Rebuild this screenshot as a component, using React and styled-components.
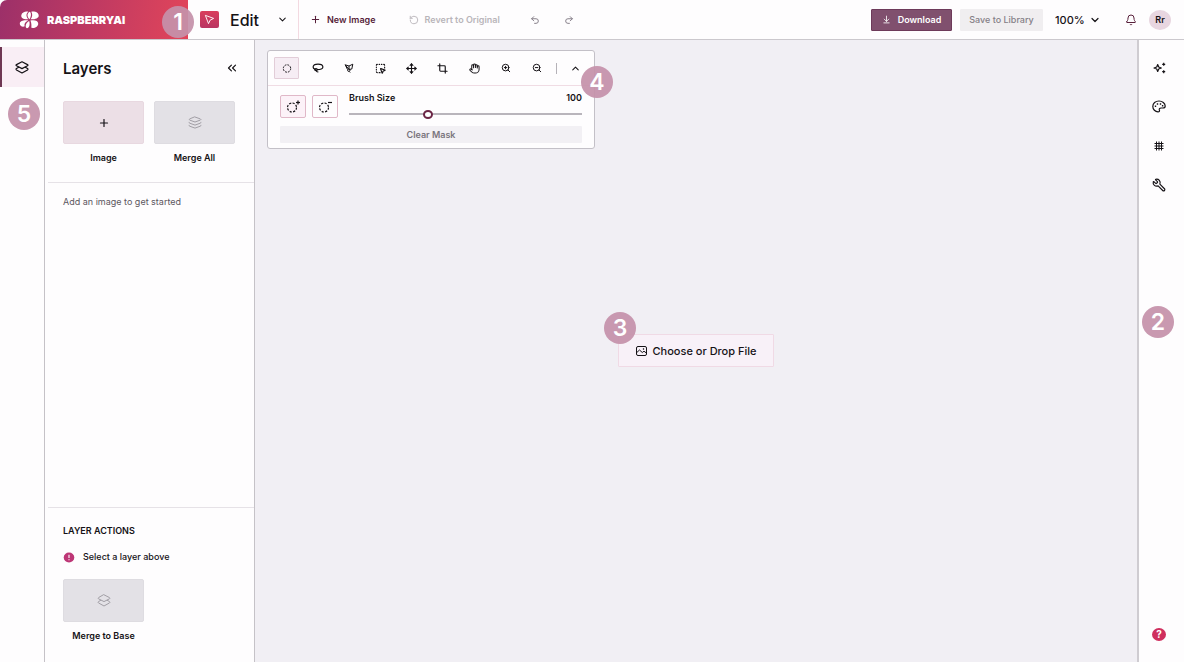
import React, { useState } from 'react'
import styled, { createGlobalStyle } from 'styled-components'
import {
    ArrowDownToLine,
    Bell,
    ChevronDown,
    ChevronUp,
    ChevronsLeft,
    Crop,
    Hand,
    Move,
    Plus,
    Redo2,
    RotateCcw,
    SquareDashedMousePointer,
    Undo2,
    Wrench,
    ZoomIn,
    ZoomOut,
} from 'lucide-react'

const GlobalStyle = createGlobalStyle`
    * {
        box-sizing: border-box;
    }
    body {
        margin: 0;
        background: #fff;
        color: #151216;
        font-family: Inter, "Liberation Sans", sans-serif;
        font-size: 9px;
    }
    button, select, input {
        font-family: inherit;
        color: inherit;
        margin: 0;
    }
    button {
        cursor: pointer;
    }
    svg {
        display: block;
        flex: none;
    }
`
const Page = styled.div`
    display: flex;
    flex-direction: column;
    min-height: 100vh;
`
const Header = styled.header`
    display: flex;
    align-items: stretch;
    height: 40px;
    border-bottom: 1px solid #cbc8cd;
    background: #fefdfe;
`
const Brand = styled.a`
    position: relative;
    display: flex;
    align-items: center;
    gap: 7px;
    width: 188px;
    padding-left: 19px;
    color: #fff;
    font-size: 11px;
    font-weight: 900;
    text-decoration: none;
    background: linear-gradient(100deg, #9c3069 0%, #c03a62 50%, #e2455a 100%);
    border-top-left-radius: 7px;
`
const Badge = styled.span`
    position: absolute;
    top: ${(props) => props.top};
    left: ${(props) => props.left};
    z-index: 2;
    width: 32px;
    height: 32px;
    border-radius: 50%;
    background: rgba(197, 145, 170, 0.93);
    color: #fff;
    font-size: 23px;
    line-height: 32px;
    font-weight: 600;
    text-align: center;
`
const ModePicker = styled.div`
    display: flex;
    align-items: center;
    gap: 11px;
    width: 111px;
    padding-left: 12px;
    border-right: 1px solid #f3d9e1;
`
const ModeIcon = styled.span`
    display: flex;
    align-items: center;
    justify-content: center;
    width: 19px;
    height: 17px;
    border-radius: 2px;
    background: linear-gradient(#d93d5c, #b93562);
`
const SelectBox = styled.div`
    position: relative;
    display: flex;
    align-items: center;
    svg {
        position: absolute;
        right: 0;
        pointer-events: none;
    }
`
const Select = styled.select`
    appearance: none;
    width: ${(props) => props.$width};
    padding: 0;
    border: 0;
    background: transparent;
    font-size: ${(props) => props.$size};
    font-weight: 500;
`
const HeaderActions = styled.div`
    display: flex;
    align-items: center;
    gap: 33px;
    padding-left: 11px;
`
const HistoryButtons = styled.div`
    display: flex;
    gap: 24px;
    margin-left: -3px;
`
const TextButton = styled.button`
    display: flex;
    align-items: center;
    gap: 6px;
    padding: 0;
    border: 0;
    background: none;
    color: ${(props) => props.$color || '#571f3a'};
    font-size: 9px;
    font-weight: 600;
`
const Account = styled.div`
    display: flex;
    align-items: center;
    margin-left: auto;
    padding-right: 13px;
    gap: 12px;
`
const ButtonPair = styled.div`
    display: flex;
    gap: 8px;
`
const SolidButton = styled.button`
    display: flex;
    align-items: center;
    justify-content: center;
    gap: 7px;
    width: ${(props) => (props.$primary ? '81px' : '83px')};
    height: 22px;
    padding: 0;
    border: 1px solid ${(props) => (props.$primary ? '#6d3a5a' : '#f0eef0')};
    border-radius: 1px;
    background: ${(props) => (props.$primary ? '#80506e' : '#f0eef0')};
    color: ${(props) => (props.$primary ? '#fff' : '#858087')};
    font-size: 9px;
    font-weight: ${(props) => (props.$primary ? 600 : 500)};
    white-space: nowrap;
`
const UserTools = styled.div`
    display: flex;
    align-items: center;
    gap: 12px;
    padding-left: 12px;
`
const Avatar = styled.button`
    width: 22px;
    height: 20px;
    padding: 0;
    border: 0;
    border-radius: 50%;
    background: #e8d6e0;
    font-size: 9px;
    font-weight: 600;
`
const Body = styled.div`
    display: flex;
    flex: 1;
`
const Rail = styled.nav`
    position: relative;
    flex: none;
    display: flex;
    flex-direction: column;
    width: 45px;
    padding-top: 7px;
    border-right: 1px solid #c5c2c7;
    background: #fefdfe;
`
const RailTab = styled.button`
    display: flex;
    align-items: center;
    justify-content: center;
    height: 40px;
    padding: 0 2px 0 0;
    border: 0;
    border-left: 2px solid #6e3753;
    background: #f9eef5;
`
const Panel = styled.aside`
    flex: none;
    display: flex;
    flex-direction: column;
    width: 210px;
    border-right: 1px solid #c5c2c7;
    padding-left: 3px;
    background: #fefdfe;
`
const PanelSection = styled.section`
    display: flex;
    flex-direction: column;
    flex: ${(props) => (props.$grow ? 1 : 'none')};
    padding: ${(props) => props.$pad};
    border-bottom: ${(props) => (props.$last ? '0' : '1px solid #e6e2e7')};
`
const PanelHead = styled.div`
    display: flex;
    align-items: center;
    justify-content: space-between;
    height: 20px;
    margin-bottom: 23px;
`
const Title = styled.h2`
    margin: 0;
    font-size: 15px;
    font-weight: 600;
`
const IconButton = styled.button`
    display: flex;
    padding: 0;
    border: 0;
    background: none;
`
const Tiles = styled.div`
    display: grid;
    grid-template-columns: 81px 81px;
    gap: 10px;
`
const Tile = styled.button`
    display: flex;
    flex-direction: column;
    align-items: stretch;
    gap: 8px;
    padding: 0;
    border: 0;
    background: none;
    font-size: 9px;
    line-height: 12px;
    font-weight: 600;
`
const TileFace = styled.span`
    display: flex;
    align-items: center;
    justify-content: center;
    height: 43px;
    border: 1px solid ${(props) => (props.$pink ? '#e8d8e0' : '#dedce1')};
    border-radius: 2px;
    background: ${(props) => (props.$pink ? '#ecdfe6' : '#e3e1e6')};
    color: ${(props) => (props.$pink ? '#151216' : '#a19ea5')};
`
const Note = styled.p`
    margin: 0;
    color: #5c575f;
    font-size: 9px;
    line-height: 12px;
`
const SubTitle = styled.h3`
    margin: 0 0 14px;
    font-size: 9px;
    line-height: 12px;
    font-weight: 600;
`
const Warning = styled.p`
    display: flex;
    align-items: center;
    gap: 8px;
    margin: 0 0 16px;
    font-size: 9px;
    line-height: 12px;
    font-weight: 500;
`
const Canvas = styled.main`
    flex: 1;
    display: flex;
    flex-direction: column;
    padding: 10px 12px;
    background: #f1eff4;
`
const Toolbox = styled.section`
    position: relative;
    width: 328px;
    border: 1px solid #c3c0c7;
    border-radius: 3px;
    background: #fefdfe;
`
const ToolRow = styled.div`
    display: flex;
    align-items: center;
    justify-content: space-between;
    height: 35px;
    padding: 0 6px;
    border-bottom: 1px solid #f0dce4;
`
const ToolButton = styled.button`
    display: flex;
    align-items: center;
    justify-content: center;
    width: 25px;
    height: 22px;
    padding: 0;
    border: 1px solid ${(props) => (props.$active ? '#e2cdd8' : 'transparent')};
    border-radius: 1px;
    background: ${(props) => (props.$active ? '#f6edf4' : 'none')};
`
const Separator = styled.span`
    width: 1px;
    height: 11px;
    background: #b5b2b8;
`
const BrushArea = styled.div`
    display: flex;
    flex-direction: column;
    gap: 7px;
    padding: 6px 12px 5px;
`
const BrushRow = styled.div`
    display: flex;
    gap: 6px;
`
const MaskButton = styled.button`
    display: flex;
    align-items: center;
    justify-content: center;
    width: 26px;
    height: 23px;
    margin-top: 3px;
    padding: 0;
    border: 1px solid #e0b8c8;
    border-radius: 2px;
    background: ${(props) => (props.$active ? '#fcf2f8' : '#fefdfe')};
`
const SliderField = styled.div`
    flex: 1;
    display: flex;
    flex-direction: column;
    gap: 5px;
    padding-left: 5px;
    font-size: 9px;
    line-height: 12px;
    font-weight: 600;
`
const SliderLabels = styled.div`
    display: flex;
    justify-content: space-between;
`
const Slider = styled.input`
    appearance: none;
    width: 100%;
    height: 10px;
    background: linear-gradient(#b9b5bc, #b9b5bc) center / 100% 2px no-repeat;
    &::-webkit-slider-thumb {
        appearance: none;
        width: 10px;
        height: 9px;
        border: 2px solid #6b2545;
        border-radius: 50%;
        background: #fff;
    }
`
const ClearButton = styled.button`
    height: 17px;
    padding: 0;
    border: 0;
    border-radius: 1px;
    background: #f2f0f4;
    color: #79747c;
    font-size: 9px;
    font-weight: 600;
`
const DropArea = styled.div`
    flex: 1;
    display: flex;
    align-items: center;
    justify-content: center;
    min-height: 300px;
    padding-bottom: 100px;
`
const DropButton = styled.button`
    position: relative;
    display: flex;
    align-items: center;
    justify-content: center;
    gap: 6px;
    width: 156px;
    height: 33px;
    padding: 0;
    border: 1px solid #f0dae5;
    border-radius: 1px;
    background: #f8f1f8;
    font-size: 11px;
    font-weight: 500;
    white-space: nowrap;
`
const ToolsRail = styled.nav`
    position: relative;
    flex: none;
    display: flex;
    flex-direction: column;
    align-items: center;
    gap: 26px;
    width: 47px;
    padding: 21px 5px 21px 0;
    border-left: 2px solid #cfccd1;
    background: #fefdfe;
`
const RailButton = styled.button`
    display: flex;
    align-items: center;
    justify-content: center;
    width: 20px;
    height: 13px;
    padding: 0;
    border: 0;
    background: none;
`
const MirroredWrench = styled(Wrench)`
    transform: scaleX(-1);
`
const HelpButton = styled.button`
    width: 14px;
    height: 13px;
    margin-top: auto;
    padding: 0;
    border: 0;
    border-radius: 50%;
    background: #cf2f5e;
    color: #fff;
    font-size: 10px;
    line-height: 13px;
    font-weight: 700;
`

const Logo = () => (
    <svg width="21" height="18" viewBox="0 0 21 18" fill="#fff">
        <path d="M9.3 8.2C5.5 8.8 1.8 7.6 2.3 4.3C2.8 1.200 7 0 9.300 .8C7 2.500 6.800 5.500 9.300 8.200Z" />
        <path d="M10.500 8.300C7.700 5.600 7.900 2.200 10.800 .8C12.400 2 12.300 5.600 10.500 8.300Z" />
        <path d="M11.700 8.300C13.600 5.600 13.600 2.700 12.300 .7C16 0 19.500 1.600 19.700 4.400C19.900 7.200 15.500 8.600 11.700 8.300Z" />
        <path d="M9.300 9.600C6.800 8.700 1.200 9 .8 12.300C.5 15.200 3.800 16.500 5.700 15.300C4.900 12.600 6.800 10.700 9.300 9.600Z" />
        <path d="M10.200 9.900C11.200 13.500 10.300 17 7.900 17.200C5.600 16.500 6.600 11.500 10.200 9.900Z" />
        <path d="M11.400 9.600C15 8.900 19 9.300 19.200 12.400C19.400 15.300 16 17.500 12.300 16.800C12.600 14.500 12.500 12 11.400 9.600Z" />
    </svg>
)
const CursorIcon = () => (
    <svg width="11" height="11" viewBox="0 0 12 12" fill="none" stroke="#fff" strokeLinejoin="round">
        <path d="M1.500 1.500L10.500 4.800L6.700 6.700L4.900 10.500Z" />
    </svg>
)
const StackIcon = ({ sheets = 2, stroke = 1 }) => (
    <svg
        width="14"
        height="13"
        viewBox="0 0 14 13"
        fill="none"
        stroke="currentColor"
        strokeWidth={stroke}
        strokeLinejoin="round"
        strokeLinecap="round"
    >
        {sheets === 3 ? (
            <>
                <path d="M7 1L12.300 2.900Q13.500 3.500 12.300 4.100L7 6L1.700 4.100Q.5 3.500 1.700 2.900Z" />
                <path d="M1 6.300Q1 6.900 1.700 7.200L7 9.100L12.300 7.200Q13 6.900 13 6.300" />
                <path d="M1 9.300Q1 9.900 1.700 10.200L7 12.100L12.300 10.200Q13 9.900 13 9.300" />
            </>
        ) : (
            <>
                <path d="M7 .8L12.500 3.600Q13.500 4.200 12.500 4.800L7 7.600L1.500 4.800Q.5 4.200 1.500 3.600Z" />
                <path d="M3.700 6.300L1.500 7.600Q.5 8.200 1.500 8.900L7 12L12.500 8.900Q13.500 8.200 12.500 7.600L10.300 6.300" />
            </>
        )}
    </svg>
)
const DashedCircle = ({ sign }) => (
    <svg width="14" height="13" viewBox="0 0 14 13" fill="none" stroke="#151216" strokeWidth={sign ? 1.2 : 1}>
        <circle
            cx={sign ? 6 : 7}
            cy={sign ? 7.5 : 6.5}
            r={sign ? 4.5 : 3.7}
            strokeDasharray={sign ? '2.2 1.334' : '1.8 1.106'}
        />
        {sign && <path d="M10 2.500H14" />}
        {sign === 'plus' && <path d="M12 0.500V4.500" />}
    </svg>
)
const LassoIcon = () => (
    <svg width="12" height="10" viewBox="0 0 12 10" fill="none" stroke="#151216" strokeWidth="1.200" strokeLinecap="round">
        <path d="M3.300 6.400C1.800 5.900 1 5.100 1.100 4C1.300 2.200 3.500 1.200 6 1.200S10.800 2.200 10.900 4C10.900 5.700 8.500 6.700 5.200 6.700" />
        <ellipse cx="4" cy="6.600" rx="1.300" ry="1" />
        <path d="M4.200 7.600C4.500 8.600 5 8.800 6 9" />
    </svg>
)
const PolygonLasso = () => (
    <svg width="10" height="10" viewBox="0 0 10 10" fill="none" stroke="#151216" strokeLinejoin="round">
        <path d="M1.200 1.800L5 3L8.800 1.200L7.800 6L5 6.500Z" />
        <path d="M1.200 1.800L3.500 6.500M5 3L5 6" />
        <circle cx="4.800" cy="7.200" r="1.200" />
        <path d="M5 8.300L6.200 9.500" />
    </svg>
)
const SparklesIcon = () => (
    <svg width="13" height="12" viewBox="0 0 13 12" fill="none" stroke="#151216" strokeWidth="1.200" strokeLinejoin="round">
        <path d="M4.700 2.500L5.700 5L8.300 6L5.700 7L4.700 9.500L3.700 7L1 6L3.700 5Z" />
        <path d="M10.700 .8V3.800M9.200 2.300H12.200M10.700 8.200V11.200M9.200 9.700H12.200" />
    </svg>
)
const PaletteIcon = () => (
    <svg width="14" height="13" viewBox="0 0 14 13" fill="none" stroke="#151216" strokeWidth="1.200">
        <path d="M7 1C3.500 1 .8 3.400 .8 6.400S3.300 11.800 6 11.800C7.300 11.800 7.800 11 7.400 10.100C6.900 8.900 7.600 8 9 8H11C12.500 8 13.200 7.200 13.200 6C13.100 3.200 10.400 1 7 1Z" />
        <path d="M3.500 5.500V7M5.500 3.300V4.800M8.500 3.300V4.800M10.600 5V6.400" strokeWidth="1.400" />
    </svg>
)
const GridIcon = () => (
    <svg width="10" height="10" viewBox="0 0 10 10" fill="none" stroke="#151216">
        <path d="M2.500 .5V9.500M5 .5V9.500M7.500 .5V9.500M.5 2.500H9.500M.5 5H9.500M.5 7.500H9.500" />
    </svg>
)
const PictureIcon = () => (
    <svg width="11" height="10" viewBox="0 0 11 10" fill="none" stroke="#151216" strokeLinejoin="round">
        <rect x=".5" y=".5" width="10" height="9" rx="1.500" />
        <path d="M.8 6.500L3.500 4L6.300 6.500L8 5.200L10.300 7" />
        <circle cx="7.500" cy="3" r=".4" />
    </svg>
)
const AlertIcon = () => (
    <svg width="12" height="11" viewBox="0 0 12 11">
        <ellipse cx="6" cy="5.500" rx="5.300" ry="5" fill="#bd3676" />
        <path d="M6 2.800V6M6 7.200V8.300" stroke="#fff" strokeWidth="1.100" />
    </svg>
)

const tools = [
    { name: 'Brush', icon: <DashedCircle /> },
    { name: 'Lasso', icon: <LassoIcon /> },
    { name: 'Polygon lasso', icon: <PolygonLasso /> },
    { name: 'Select area', icon: <SquareDashedMousePointer size={11} strokeWidth={2.5} /> },
    { name: 'Move', icon: <Move size={11} strokeWidth={2.5} /> },
    { name: 'Crop', icon: <Crop size={11} strokeWidth={2.5} /> },
    { name: 'Pan', icon: <Hand size={11} strokeWidth={2.2} /> },
    { name: 'Zoom in', icon: <ZoomIn size={10} strokeWidth={2.4} /> },
    { name: 'Zoom out', icon: <ZoomOut size={10} strokeWidth={2.4} /> },
]

const TopBar = () => (
    <Header>
        <Brand href="#">
            <Logo />
            RASPBERRYAI
            <Badge top="6px" left="162px">1</Badge>
        </Brand>
        <ModePicker>
            <ModeIcon>
                <CursorIcon />
            </ModeIcon>
            <SelectBox>
                <Select aria-label="Mode" $width="58px" $size="16px">
                    <option>Edit</option>
                </Select>
                <ChevronDown size={11} strokeWidth={2.2} />
            </SelectBox>
        </ModePicker>
        <HeaderActions>
            <TextButton>
                <Plus size={11} strokeWidth={2.2} />
                New Image
            </TextButton>
            <TextButton $color="#b9b5ba">
                <RotateCcw size={10} strokeWidth={2.2} />
                Revert to Original
            </TextButton>
            <HistoryButtons>
                <TextButton aria-label="Undo" $color="#87808a">
                    <Undo2 size={10} strokeWidth={2.4} />
                </TextButton>
                <TextButton aria-label="Redo" $color="#87808a">
                    <Redo2 size={10} strokeWidth={2.4} />
                </TextButton>
            </HistoryButtons>
        </HeaderActions>
        <Account>
            <ButtonPair>
                <SolidButton $primary>
                    <ArrowDownToLine size={9} strokeWidth={2.2} />
                    Download
                </SolidButton>
                <SolidButton>Save to Library</SolidButton>
            </ButtonPair>
            <SelectBox>
                <Select aria-label="Zoom" $width="46px" $size="11px">
                    <option>100%</option>
                </Select>
                <ChevronDown size={12} strokeWidth={2.4} />
            </SelectBox>
            <UserTools>
                <IconButton aria-label="Notifications">
                    <Bell size={12} strokeWidth={2} color="#571f3a" />
                </IconButton>
                <Avatar>Rr</Avatar>
            </UserTools>
        </Account>
    </Header>
)

const LayersPanel = () => (
    <Panel>
        <PanelSection $pad="18px 15px 18px">
            <PanelHead>
                <Title>Layers</Title>
                <IconButton aria-label="Collapse panel">
                    <ChevronsLeft size={14} strokeWidth={2} />
                </IconButton>
            </PanelHead>
            <Tiles>
                <Tile>
                    <TileFace $pink>
                        <Plus size={12} strokeWidth={2.4} />
                    </TileFace>
                    Image
                </Tile>
                <Tile>
                    <TileFace>
                        <StackIcon sheets={3} />
                    </TileFace>
                    Merge All
                </Tile>
            </Tiles>
        </PanelSection>
        <PanelSection $grow $pad="13px 15px">
            <Note>Add an image to get started</Note>
        </PanelSection>
        <PanelSection $last $pad="17px 15px 20px">
            <SubTitle>LAYER ACTIONS</SubTitle>
            <Warning>
                <AlertIcon />
                Select a layer above
            </Warning>
            <Tiles>
                <Tile>
                    <TileFace>
                        <StackIcon />
                    </TileFace>
                    Merge to Base
                </Tile>
            </Tiles>
        </PanelSection>
    </Panel>
)

const BrushTools = () => {
    const [tool, setTool] = useState('Brush')
    const [mask, setMask] = useState('plus')
    const [size, setSize] = useState(100)
    return (
        <Toolbox>
            <ToolRow>
                {tools.map((t) => (
                    <ToolButton
                        key={t.name}
                        aria-label={t.name}
                        $active={tool === t.name}
                        onClick={() => setTool(t.name)}
                    >
                        {t.icon}
                    </ToolButton>
                ))}
                <Separator />
                <ToolButton aria-label="Collapse">
                    <ChevronUp size={11} strokeWidth={2.2} />
                </ToolButton>
            </ToolRow>
            <BrushArea>
                <BrushRow>
                    <MaskButton
                        aria-label="Add to mask"
                        $active={mask === 'plus'}
                        onClick={() => setMask('plus')}
                    >
                        <DashedCircle sign="plus" />
                    </MaskButton>
                    <MaskButton
                        aria-label="Remove from mask"
                        $active={mask === 'minus'}
                        onClick={() => setMask('minus')}
                    >
                        <DashedCircle sign="minus" />
                    </MaskButton>
                    <SliderField>
                        <SliderLabels>
                            <label htmlFor="brush-size">Brush Size</label>
                            <output htmlFor="brush-size">{size}</output>
                        </SliderLabels>
                        <Slider
                            id="brush-size"
                            type="range"
                            min="0"
                            max="300"
                            value={size}
                            onChange={(e) => setSize(e.target.value)}
                        />
                    </SliderField>
                </BrushRow>
                <ClearButton>Clear Mask</ClearButton>
            </BrushArea>
            <Badge top="15px" left="313px">4</Badge>
        </Toolbox>
    )
}

const App = () => (
    <Page>
        <GlobalStyle />
        <TopBar />
        <Body>
            <Rail>
                <RailTab aria-label="Layers">
                    <StackIcon stroke={1.2} />
                </RailTab>
                <Badge top="58px" left="8px">5</Badge>
            </Rail>
            <LayersPanel />
            <Canvas>
                <BrushTools />
                <DropArea>
                    <DropButton>
                        <PictureIcon />
                        Choose or Drop File
                        <Badge top="-23px" left="-15px">3</Badge>
                    </DropButton>
                </DropArea>
            </Canvas>
            <ToolsRail>
                <RailButton aria-label="Generate">
                    <SparklesIcon />
                </RailButton>
                <RailButton aria-label="Colors">
                    <PaletteIcon />
                </RailButton>
                <RailButton aria-label="Grid">
                    <GridIcon />
                </RailButton>
                <RailButton aria-label="Adjust">
                    <MirroredWrench size={14} strokeWidth={2} />
                </RailButton>
                <Badge top="266px" left="3px">2</Badge>
                <HelpButton aria-label="Help">?</HelpButton>
            </ToolsRail>
        </Body>
    </Page>
)

export default App
